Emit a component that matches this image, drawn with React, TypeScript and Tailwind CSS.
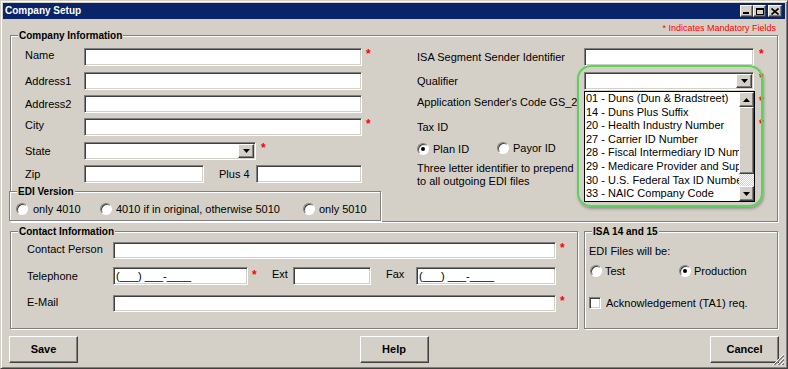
import React from 'react';

const sunken =
  'bg-white border border-t-[#808080] border-l-[#808080] border-r-white border-b-white shadow-[inset_1px_1px_0_#404040,inset_-1px_-1px_0_#d4d0c8]';
const raised =
  'bg-[#d4d0c8] border border-t-white border-l-white border-r-[#404040] border-b-[#404040] shadow-[inset_-1px_-1px_0_#808080]';

const Star: React.FC<{ className?: string }> = ({ className = '' }) => (
  <span className={`text-[#ff0000] text-[12px] font-bold leading-none self-start ${className}`}>*</span>
);

const Group: React.FC<{ title: string; className?: string; children?: React.ReactNode }> = ({
  title,
  className = '',
  children,
}) => (
  <div className={`relative border border-[#808080] shadow-[1px_1px_0_#fff,inset_1px_1px_0_#fff] ${className}`}>
    <span className="absolute -top-[6px] left-[7px] px-[1px] bg-[#d4d0c8] text-[10px] font-bold leading-[12px] whitespace-nowrap">
      {title}
    </span>
    {children}
  </div>
);

const Radio: React.FC<{ checked?: boolean }> = ({ checked }) => (
  <span className="relative inline-block w-[12px] h-[12px] shrink-0 rounded-full bg-white border border-t-[#808080] border-l-[#808080] border-r-white border-b-white shadow-[inset_1px_1px_0_#404040]">
    {checked && <span className="absolute left-[3px] top-[3px] w-[4px] h-[4px] rounded-full bg-black" />}
  </span>
);

const Arrow: React.FC<{ up?: boolean }> = ({ up }) => (
  <svg width="7" height="4" viewBox="0 0 7 4">
    <path d={up ? 'M3.5 0L7 4H0z' : 'M0 0h7L3.5 4z'} fill="#000" />
  </svg>
);

const Combo: React.FC<{ className?: string }> = ({ className = '' }) => (
  <div className={`${sunken} flex justify-end p-[1px] ${className}`}>
    <span className={`${raised} w-[16px] h-full flex items-center justify-center`}>
      <Arrow />
    </span>
  </div>
);

const qualifiers = [
  '01 - Duns (Dun & Bradstreet)',
  '14 - Duns Plus Suffix',
  '20 - Health Industry Number',
  '27 - Carrier ID Number',
  '28 - Fiscal Intermediary ID Number',
  '29 - Medicare Provider and Supplier Identification Number',
  '30 - U.S. Federal Tax ID Number',
  '33 - NAIC Company Code',
];

export default function App() {
  return (
    <div className="relative w-[788px] h-[369px] overflow-hidden bg-[#d4d0c8] text-black text-[11px] [font-family:'Liberation_Sans',Arial,sans-serif] border border-t-[#d4d0c8] border-l-[#d4d0c8] border-r-[#404040] border-b-[#404040] shadow-[inset_1px_1px_0_#fff,inset_-1px_-1px_0_#808080] p-[2px]">
      {/* Title bar */}
      <div className="h-[16px] bg-[#0a246a] flex items-center justify-between pl-[2px] pr-[3px]">
        <span className="text-white font-bold text-[10px] leading-none">Company Setup</span>
        <div className="flex items-center">
          <span className={`${raised} w-[13px] h-[12px] flex items-end justify-start pl-[2px] pb-[2px]`}>
            <span className="w-[6px] h-[2px] bg-black" />
          </span>
          <span className={`${raised} w-[13px] h-[12px] flex items-center justify-center`}>
            <span className="w-[8px] h-[7px] border border-black border-t-2" />
          </span>
          <span className={`${raised} ml-[2px] w-[14px] h-[12px] flex items-center justify-center`}>
            <svg width="8" height="7" viewBox="0 0 8 7">
              <path d="M0.5 0.5L7.5 6.5M7.5 0.5L0.5 6.5" stroke="#000" strokeWidth="1.6" />
            </svg>
          </span>
        </div>
      </div>

      <div className="px-[7px]">
        <div className="mt-[3px] h-[12px] leading-[12px] text-right text-[9px] text-[#ff0000] pr-[2px]">
          * Indicates Mandatory Fields
        </div>

        {/* Company Information */}
        <Group title="Company Information" className="mt-[1px] h-[187px] flex">
          <div className="w-[406px] pl-[14px] pt-[12px] flex flex-col">
            <div className="flex items-center h-[18px]">
              <span className="w-[59px] -mt-[4px]">Name</span>
              <div className={`${sunken} w-[278px] h-[18px]`} />
              <Star className="ml-[4px]" />
            </div>
            <div className="flex items-center h-[18px] mt-[6px]">
              <span className="w-[59px]">Address1</span>
              <div className={`${sunken} w-[278px] h-[18px]`} />
            </div>
            <div className="flex items-center h-[18px] mt-[5px]">
              <span className="w-[59px]">Address2</span>
              <div className={`${sunken} w-[278px] h-[18px]`} />
            </div>
            <div className="flex items-center h-[18px] mt-[5px]">
              <span className="w-[59px] -mt-[3px]">City</span>
              <div className={`${sunken} w-[278px] h-[18px]`} />
              <Star className="ml-[4px]" />
            </div>
            <div className="flex items-center h-[18px] mt-[6px]">
              <span className="w-[59px]">State</span>
              <Combo className="w-[172px] h-[18px]" />
              <Star className="ml-[5px]" />
            </div>
            <div className="flex items-center h-[18px] mt-[5px]">
              <span className="w-[59px]">Zip</span>
              <div className={`${sunken} w-[120px] h-[18px]`} />
              <span className="ml-[15px] w-[37px]">Plus 4</span>
              <div className={`${sunken} w-[106px] h-[18px]`} />
            </div>

            <Group title="EDI Version" className="mt-[8px] -ml-[16px] w-[372px] h-[31px] bg-[#d4d0c8]">
              <div className="mt-[11px] ml-[6px] h-[12px] flex items-center">
                <div className="w-[84px] flex items-center gap-[5px]">
                  <Radio />
                  <span>only 4010</span>
                </div>
                <div className="w-[203px] flex items-center gap-[4px]">
                  <Radio />
                  <span>4010 if in original, otherwise 5010</span>
                </div>
                <div className="flex items-center gap-[4px]">
                  <Radio />
                  <span>only 5010</span>
                </div>
              </div>
            </Group>
          </div>

          <div className="flex-1 pt-[12px] flex flex-col">
            <div className="flex items-center h-[18px]">
              <span className="w-[167px]">ISA Segment Sender Identifier</span>
              <div className={`${sunken} w-[170px] h-[18px]`} />
              <Star className="ml-[5px]" />
            </div>
            <div className="flex items-center h-[18px] mt-[6px]">
              <span className="w-[167px]">Qualifier</span>
              <div className="relative w-[170px] h-[18px]">
                <Combo className="w-[170px] h-[18px]" />
                {/* open drop-down list */}
                <div className="absolute left-0 top-[19px] z-20 w-[171px] h-[111px] bg-white border border-black flex">
                  <div className="flex-1 overflow-hidden pl-[1px] leading-[13.6px] whitespace-nowrap">
                    {qualifiers.map(q => (
                      <div key={q}>{q}</div>
                    ))}
                  </div>
                  <div className="w-[15px] flex flex-col">
                    <span className={`${raised} h-[15px] flex items-center justify-center`}>
                      <Arrow up />
                    </span>
                    <span className={`${raised} h-[67px]`} />
                    <span className="h-[12px] [background-image:repeating-conic-gradient(#ffffff_0%_25%,#d4d0c8_0%_50%)] [background-size:2px_2px]" />
                    <span className={`${raised} h-[15px] flex items-center justify-center`}>
                      <Arrow />
                    </span>
                  </div>
                </div>
                {/* highlight ring */}
                <div className="absolute -left-[7px] -top-[7px] z-30 w-[186px] h-[142px] rounded-[14px] border-2 border-[#58d458] shadow-[1px_2px_3px_rgba(0,0,0,0.3)] pointer-events-none" />
              </div>
              <Star className="ml-[5px]" />
            </div>
            <div className="flex items-center h-[18px] mt-[5px]">
              <span className="w-[167px] whitespace-nowrap -mt-[3px]">Application Sender's Code GS_2</span>
              <div className="w-[170px] h-[18px]" />
              <Star className="ml-[5px]" />
            </div>
            <div className="flex items-center h-[18px] mt-[5px]">
              <span className="w-[167px]">Tax ID</span>
              <div className="w-[170px] h-[18px]" />
              <Star className="ml-[5px]" />
            </div>
            <div className="flex items-center h-[12px] mt-[7px]">
              <div className="w-[80px] flex items-center gap-[4px]">
                <Radio checked />
                <span>Plan ID</span>
              </div>
              <div className="flex items-center gap-[4px] -mt-[2px]">
                <Radio />
                <span>Payor ID</span>
              </div>
            </div>
            <div className="mt-[7px] leading-[13px]">
              <div>Three letter identifier to prepend</div>
              <div>to all outgoing EDI files</div>
            </div>
          </div>
        </Group>

        {/* Contact / ISA 14 and 15 */}
        <div className="mt-[9px] flex gap-[6px]">
          <Group title="Contact Information" className="w-[568px] h-[98px] pl-[16px] pt-[10px]">
            <div className="flex items-center h-[17px]">
              <span className="w-[86px] -mt-[3px]">Contact Person</span>
              <div className={`${sunken} w-[443px] h-[17px]`} />
              <Star className="ml-[4px]" />
            </div>
            <div className="flex items-center h-[18px] mt-[8px]">
              <span className="w-[86px]">Telephone</span>
              <div className={`${sunken} w-[135px] h-[18px] flex items-center pl-[2px]`}>
                <span className="leading-none">(___) ___-____</span>
              </div>
              <span className="w-[24px] self-start flex">
                <Star className="ml-[4px] mt-[2px]" />
              </span>
              <span className="w-[21px] -mt-[4px]">Ext</span>
              <div className={`${sunken} w-[78px] h-[18px]`} />
              <span className="ml-[15px] w-[30px] -mt-[4px]">Fax</span>
              <div className={`${sunken} w-[140px] h-[18px] flex items-center pl-[2px]`}>
                <span className="leading-none">(___) ___-____</span>
              </div>
            </div>
            <div className="flex items-center h-[17px] mt-[10px]">
              <span className="w-[86px] -mt-[3px]">E-Mail</span>
              <div className={`${sunken} w-[443px] h-[17px]`} />
              <Star className="ml-[4px]" />
            </div>
          </Group>

          <Group title="ISA 14 and 15" className="w-[194px] h-[98px] pl-[4px] pt-[12px]">
            <div className="leading-[14px]">EDI Files will be:</div>
            <div className="mt-[7px] pl-[1px] h-[12px] flex items-center">
              <div className="w-[89px] flex items-center gap-[3px]">
                <Radio />
                <span>Test</span>
              </div>
              <div className="flex items-center gap-[3px]">
                <Radio checked />
                <span>Production</span>
              </div>
            </div>
            <div className="mt-[20px] h-[12px] flex items-center gap-[5px]">
              <span className={`${sunken} w-[12px] h-[12px] shrink-0`} />
              <span>Acknowledgement (TA1) req.</span>
            </div>
          </Group>
        </div>

        {/* Buttons */}
        <div className="mt-[7px] -mx-[1px] flex justify-between">
          <button className={`${raised} w-[69px] h-[27px] font-bold text-[11px]`}>Save</button>
          <button className={`${raised} w-[69px] h-[27px] font-bold text-[11px]`}>Help</button>
          <button className={`${raised} w-[69px] h-[27px] font-bold text-[11px]`}>Cancel</button>
        </div>
      </div>

      {/* size grip */}
      <svg className="absolute right-[2px] bottom-[2px]" width="12" height="12" viewBox="0 0 12 12">
        <path d="M11 1L1 11M11 5L5 11M11 9L9 11" stroke="#808080" strokeWidth="1" />
        <path d="M11 2L2 11M11 6L6 11M11 10L10 11" stroke="#808080" strokeWidth="1" />
        <path d="M11 0L0 11M11 4L4 11M11 8L8 11" stroke="#ffffff" strokeWidth="1" />
      </svg>
    </div>
  );
}
